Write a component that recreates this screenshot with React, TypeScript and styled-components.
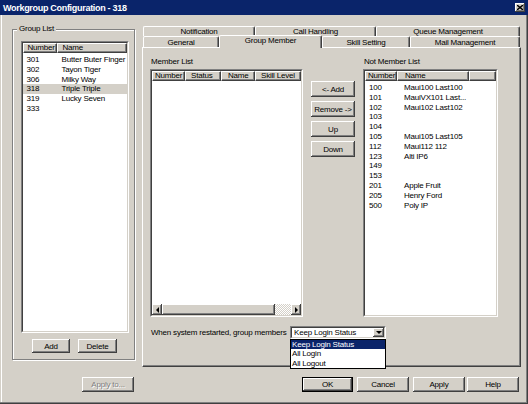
import React from 'react';
import styled, { createGlobalStyle, css } from 'styled-components';

const GlobalStyle = createGlobalStyle`
  html, body {
    margin: 0;
    padding: 0;
    background: #d4d0c8;
  }
  body {
    font-family: "Liberation Sans", Arial, sans-serif;
    font-size: 8px;
    letter-spacing: -0.2px;
    color: #000;
  }
`;

const raised = css`
  background: #d4d0c8;
  box-shadow: inset -1px -1px #404040, inset 1px 1px #fff, inset -2px -2px #808080, inset 2px 2px #d4d0c8;
`;

const StyledWindow = styled.div`
  box-sizing: border-box;
  width: 528px;
  height: 404px;
  display: flex;
  flex-direction: column;
  background: #d4d0c8;
  box-shadow: inset -1px -1px #404040, inset -2px -2px #808080, inset 1px 0 #d4d0c8, inset 2px 0 #fff;
  overflow: hidden;
`;

const StyledTitleBar = styled.div`
  height: 15px;
  flex: none;
  display: flex;
  align-items: center;
  justify-content: space-between;
  padding: 0 3px 0 3px;
  background: #0a246a;
  color: #fff;
  font-weight: bold;
  font-size: 9px;
  letter-spacing: -0.3px;
`;

const StyledCloseButton = styled.div`
  ${raised};
  width: 10px;
  height: 9px;
  display: flex;
  align-items: center;
  justify-content: center;
`;

const StyledBody = styled.div`
  flex: 1;
  display: flex;
  flex-direction: column;
  padding: 9px 7px 0 12px;
`;

const StyledMainRow = styled.div`
  display: flex;
  align-items: flex-start;
  gap: 7px;
`;

const StyledGroupBox = styled.fieldset`
  box-sizing: border-box;
  width: 123px;
  margin: 0;
  padding: 7px 5px 6px 7px;
  border: 1px solid #808080;
  box-shadow: 1px 1px 0 #fff, inset 1px 1px 0 #fff;
  display: flex;
  flex-direction: column;
  align-items: center;
`;

const StyledLegend = styled.legend`
  margin-left: -3px;
  padding: 0 2px;
  line-height: 10px;
  background: #d4d0c8;
`;

const StyledSunken = styled.div<{ $w: number; $h: number }>`
  box-sizing: border-box;
  width: ${(p) => p.$w}px;
  height: ${(p) => p.$h}px;
  border: 1px solid;
  border-color: #808080 #fff #fff #808080;
  display: flex;
`;

const StyledSunkenInner = styled.div`
  flex: 1;
  min-width: 0;
  border: 1px solid;
  border-color: #404040 #d4d0c8 #d4d0c8 #404040;
  background: #fff;
  display: flex;
  flex-direction: column;
  overflow: hidden;
`;

const StyledHeader = styled.div`
  height: 10px;
  flex: none;
  display: flex;
  background: #d4d0c8;
`;

const StyledHeaderCell = styled.div<{ $w?: number; $pad: number }>`
  box-sizing: border-box;
  ${(p) => (p.$w ? `width: ${p.$w}px; flex: none;` : 'flex: 1;')}
  height: 10px;
  line-height: 8px;
  padding-left: ${(p) => p.$pad}px;
  border-top: 1px solid #fff;
  border-left: 1px solid #fff;
  border-right: 1px solid #404040;
  border-bottom: 1px solid #404040;
  box-shadow: inset -1px -1px #808080;
  white-space: nowrap;
  overflow: hidden;
`;

const StyledRows = styled.div`
  flex: 1;
  padding-top: 2px;
`;

const StyledRow = styled.div<{ $selected?: boolean }>`
  display: flex;
  height: 9.8px;
  line-height: 9.8px;
  background: ${(p) => (p.$selected ? '#d4d0c8' : 'transparent')};
`;

const StyledCell = styled.div<{ $w?: number; $pad: number }>`
  box-sizing: border-box;
  ${(p) => (p.$w ? `width: ${p.$w}px; flex: none;` : 'flex: 1;')}
  padding-left: ${(p) => p.$pad}px;
  white-space: nowrap;
  overflow: hidden;
`;

const StyledScrollBar = styled.div`
  height: 11px;
  flex: none;
  display: flex;
`;

const StyledArrowButton = styled.div`
  ${raised};
  width: 10px;
  flex: none;
  display: flex;
  align-items: center;
  justify-content: center;
`;

const StyledThumb = styled.div<{ $w: number }>`
  ${raised};
  width: ${(p) => p.$w}px;
  flex: none;
`;

const StyledTrack = styled.div`
  flex: 1;
  background: repeating-conic-gradient(#fff 0 25%, #d4d0c8 0 50%) 0 0 / 2px 2px;
`;

const StyledButton = styled.button<{ $w: number; $h?: number; $default?: boolean }>`
  ${raised};
  box-sizing: border-box;
  width: ${(p) => p.$w}px;
  height: ${(p) => p.$h ?? 15}px;
  padding: 0;
  border: none;
  font: inherit;
  letter-spacing: inherit;
  color: #000;
  flex: none;
  ${(p) =>
    p.$default &&
    css`
      border: 1px solid #000;
      box-shadow: inset -1px -1px #404040, inset 1px 1px #fff, inset -2px -2px #808080;
    `}
  &:disabled {
    color: #808080;
    text-shadow: 1px 1px 0 #fff;
  }
`;

const StyledGroupButtons = styled.div`
  display: flex;
  gap: 8px;
  margin-top: 6px;
`;

const StyledTabs = styled.div`
  width: 379px;
  height: 343px;
  display: flex;
  flex-direction: column;
`;

const StyledTabRow = styled.div<{ $h: number; $top?: number }>`
  height: ${(p) => p.$h}px;
  margin-top: ${(p) => p.$top ?? 0}px;
  padding-left: 1px;
  display: flex;
  flex: none;
`;

const StyledTab = styled.div<{ $w: number; $active?: boolean }>`
  box-sizing: border-box;
  width: ${(p) => p.$w}px;
  height: 100%;
  border-top: 1px solid #fff;
  border-left: 1px solid #fff;
  border-right: 1px solid #404040;
  box-shadow: inset -1px 0 #808080;
  border-radius: 2px 2px 0 0;
  background: #d4d0c8;
  display: flex;
  align-items: center;
  justify-content: center;
  white-space: nowrap;
  ${(p) =>
    p.$active &&
    css`
      position: relative;
      z-index: 1;
      height: calc(100% + 2px);
      margin-top: -1px;
      margin-bottom: -1px;
      padding-bottom: 3px;
    `}
`;

const StyledPanel = styled.div`
  flex: 1;
  box-sizing: border-box;
  border-top: 1px solid #fff;
  border-left: 1px solid #fff;
  border-right: 1px solid #404040;
  border-bottom: 1px solid #404040;
  box-shadow: inset -1px -1px #808080;
  padding: 9px 0 0 7px;
  display: flex;
  flex-direction: column;
`;

const StyledTopSection = styled.div`
  display: flex;
  gap: 8px;
`;

const StyledColumn = styled.div`
  display: flex;
  flex-direction: column;
`;

const StyledLabel = styled.div`
  height: 12px;
  line-height: 10px;
  padding-left: 1px;
`;

const StyledMoveButtons = styled.div`
  padding-top: 24px;
  display: flex;
  flex-direction: column;
  gap: 4px;
`;

const StyledBottomRow = styled.div`
  margin-top: 9px;
  display: flex;
  align-items: center;
  height: 13px;
`;

const StyledRestartLabel = styled.div`
  width: 140px;
  padding-left: 1px;
  box-sizing: border-box;
  white-space: nowrap;
`;

const StyledCombo = styled.div`
  position: relative;
`;

const StyledComboField = styled.div`
  flex: 1;
  min-width: 0;
  display: flex;
  align-items: center;
  justify-content: space-between;
  padding-left: 2px;
  background: #fff;
  border: 1px solid;
  border-color: #404040 #d4d0c8 #d4d0c8 #404040;
  white-space: nowrap;
`;

const StyledDropButton = styled.div`
  ${raised};
  width: 11px;
  height: 9px;
  flex: none;
  display: flex;
  align-items: center;
  justify-content: center;
`;

const StyledDropList = styled.div`
  position: absolute;
  top: 100%;
  left: 0;
  width: 96px;
  box-sizing: border-box;
  border: 1px solid #000;
  background: #fff;
  z-index: 2;
`;

const StyledOption = styled.div<{ $selected?: boolean }>`
  height: 9.3px;
  line-height: 9.3px;
  padding-left: 1px;
  background: ${(p) => (p.$selected ? '#0a246a' : '#fff')};
  color: ${(p) => (p.$selected ? '#fff' : '#000')};
`;

const StyledFooter = styled.div`
  margin-top: 10px;
  padding-right: 2px;
  display: flex;
  align-items: center;
`;

const StyledFooterSpacer = styled.div`
  flex: 1;
`;

type Column = { label: string; w?: number; pad: number; headPad?: number };

type ListViewProps = {
  w: number;
  h: number;
  columns: Column[];
  rows?: string[][];
  selected?: number;
  scroll?: boolean;
};

const Triangle: React.FC<{ dir: 'left' | 'right' | 'down' }> = ({ dir }) => {
  const points = dir === 'left' ? '3,0 3,6 0,3' : dir === 'right' ? '0,0 0,6 3,3' : '0,0 6,0 3,3';
  const size = dir === 'down' ? { width: 6, height: 3 } : { width: 3, height: 6 };
  return (
    <svg width={size.width} height={size.height} viewBox={`0 0 ${size.width} ${size.height}`}>
      <polygon points={points} fill="#000" />
    </svg>
  );
};

const ListView: React.FC<ListViewProps> = ({ w, h, columns, rows = [], selected, scroll }) => (
  <StyledSunken $w={w} $h={h}>
    <StyledSunkenInner>
      <StyledHeader>
        {columns.map((c, i) => (
          <StyledHeaderCell key={i} $w={c.w} $pad={c.headPad ?? c.pad}>
            {c.label}
          </StyledHeaderCell>
        ))}
      </StyledHeader>
      <StyledRows>
        {rows.map((r, i) => (
          <StyledRow key={i} $selected={i === selected}>
            {columns.map((c, j) => (
              <StyledCell key={j} $w={c.w} $pad={c.pad}>
                {r[j] ?? ''}
              </StyledCell>
            ))}
          </StyledRow>
        ))}
      </StyledRows>
      {scroll && (
        <StyledScrollBar>
          <StyledArrowButton>
            <Triangle dir="left" />
          </StyledArrowButton>
          <StyledThumb $w={113} />
          <StyledTrack />
          <StyledArrowButton>
            <Triangle dir="right" />
          </StyledArrowButton>
        </StyledScrollBar>
      )}
    </StyledSunkenInner>
  </StyledSunken>
);

const groups = [
  ['301', 'Butter Buter Finger'],
  ['302', 'Tayon Tiger'],
  ['306', 'Milky Way'],
  ['318', 'Triple Triple'],
  ['319', 'Lucky Seven'],
  ['333', ''],
];

const notMembers = [
  ['100', 'Maui100 Last100'],
  ['101', 'MauiVX101 Last...'],
  ['102', 'Maui102 Last102'],
  ['103', ''],
  ['104', ''],
  ['105', 'Maui105 Last105'],
  ['112', 'Maui112 112'],
  ['123', 'Alti IP6'],
  ['149', ''],
  ['153', ''],
  ['201', 'Apple Fruit'],
  ['205', 'Henry Ford'],
  ['500', 'Poly IP'],
];

const tabRows = [
  [
    { label: 'Notification', w: 112 },
    { label: 'Call Handling', w: 121 },
    { label: 'Queue Management', w: 144 },
  ],
  [
    { label: 'General', w: 76 },
    { label: 'Group Member', w: 103, active: true },
    { label: 'Skill Setting', w: 88 },
    { label: 'Mail Management', w: 110 },
  ],
];

const App: React.FC = () => (
  <>
    <GlobalStyle />
    <StyledWindow>
      <StyledTitleBar>
        <span>Workgroup Configuration - 318</span>
        <StyledCloseButton>
          <svg width="6" height="5" viewBox="0 0 6 5">
            <path d="M0 0 L6 5 M6 0 L0 5" stroke="#000" strokeWidth="1.4" />
          </svg>
        </StyledCloseButton>
      </StyledTitleBar>
      <StyledBody>
        <StyledMainRow>
          <StyledGroupBox>
            <StyledLegend>Group List</StyledLegend>
            <ListView
              w={108}
              h={292}
              columns={[
                { label: 'Number', w: 34, pad: 4 },
                { label: 'Name', pad: 5 },
              ]}
              rows={groups}
              selected={3}
            />
            <StyledGroupButtons>
              <StyledButton $w={38} $h={14}>Add</StyledButton>
              <StyledButton $w={39} $h={14}>Delete</StyledButton>
            </StyledGroupButtons>
          </StyledGroupBox>

          <StyledTabs>
            {tabRows.map((row, i) => (
              <StyledTabRow key={i} $h={i === 0 ? 10 : 11} $top={i === 0 ? 2 : 0}>
                {row.map((t) => (
                  <StyledTab key={t.label} $w={t.w} $active={'active' in t && t.active}>
                    {t.label}
                  </StyledTab>
                ))}
              </StyledTabRow>
            ))}
            <StyledPanel>
              <StyledTopSection>
                <StyledColumn>
                  <StyledLabel>Member List</StyledLabel>
                  <ListView
                    w={153}
                    h={248}
                    columns={[
                      { label: 'Number', w: 33, pad: 4, headPad: 2 },
                      { label: 'Status', w: 36, pad: 5 },
                      { label: 'Name', w: 34, pad: 6 },
                      { label: 'Skill Level', pad: 5 },
                    ]}
                    scroll
                  />
                </StyledColumn>
                <StyledMoveButtons>
                  <StyledButton $w={44} $h={16}>&lt;- Add</StyledButton>
                  <StyledButton $w={44} $h={16}>Remove -&gt;</StyledButton>
                  <StyledButton $w={44} $h={16}>Up</StyledButton>
                  <StyledButton $w={44} $h={16}>Down</StyledButton>
                </StyledMoveButtons>
                <StyledColumn>
                  <StyledLabel>Not Member List</StyledLabel>
                  <ListView
                    w={135}
                    h={248}
                    columns={[
                      { label: 'Number', w: 32, pad: 4, headPad: 2 },
                      { label: 'Name', w: 72, pad: 7 },
                      { label: '', w: 27, pad: 0 },
                    ]}
                    rows={notMembers}
                  />
                </StyledColumn>
              </StyledTopSection>
              <StyledBottomRow>
                <StyledRestartLabel>When system restarted, group members</StyledRestartLabel>
                <StyledCombo>
                  <StyledSunken $w={96} $h={13}>
                    <StyledComboField>
                      <span>Keep Login Status</span>
                      <StyledDropButton>
                        <Triangle dir="down" />
                      </StyledDropButton>
                    </StyledComboField>
                  </StyledSunken>
                  <StyledDropList>
                    <StyledOption $selected>Keep Login Status</StyledOption>
                    <StyledOption>All Login</StyledOption>
                    <StyledOption>All Logout</StyledOption>
                  </StyledDropList>
                </StyledCombo>
              </StyledBottomRow>
            </StyledPanel>
          </StyledTabs>
        </StyledMainRow>

        <StyledFooter>
          <StyledButton $w={52} disabled style={{ marginLeft: 70 }}>
            Apply to...
          </StyledButton>
          <StyledFooterSpacer />
          <StyledButton $w={51} $default>OK</StyledButton>
          <StyledButton $w={52} style={{ marginLeft: 4 }}>Cancel</StyledButton>
          <StyledButton $w={52} style={{ marginLeft: 4 }}>Apply</StyledButton>
          <StyledButton $w={52} style={{ marginLeft: 2 }}>Help</StyledButton>
        </StyledFooter>
      </StyledBody>
    </StyledWindow>
  </>
);

export default App;
